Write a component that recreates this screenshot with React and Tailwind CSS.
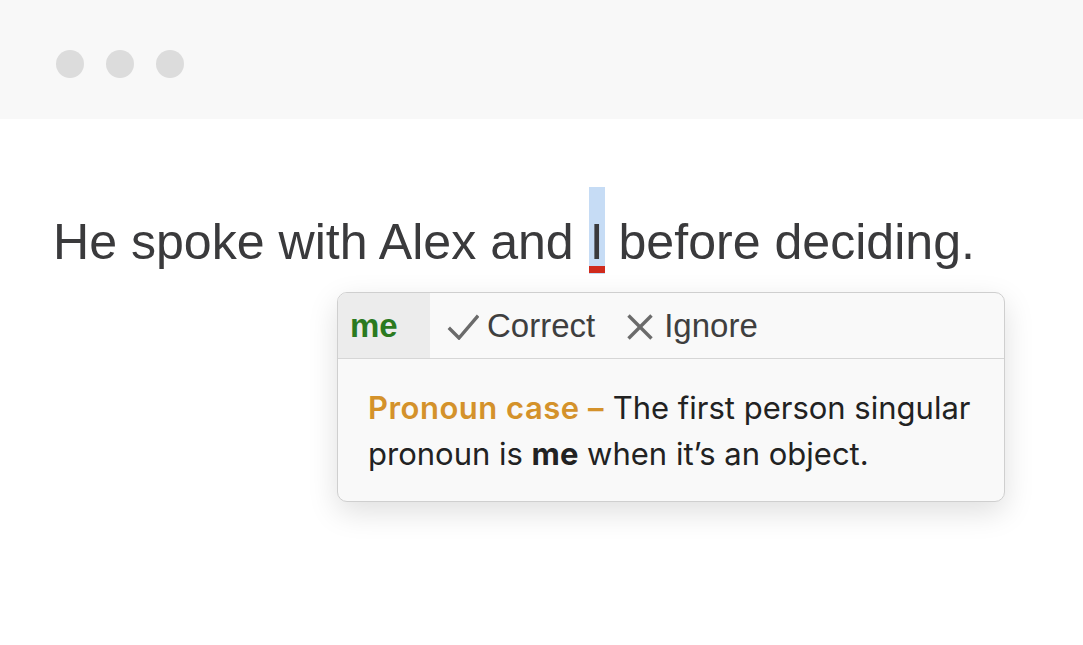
export default function App() {
  return (
    <div className="relative w-[1083px] h-[645px] bg-white overflow-hidden">
      {/* window chrome */}
      <div className="h-[119px] bg-[#f8f8f8] flex items-center gap-[22px] pl-[56px] pt-[8px]">
        <span className="w-[28px] h-[28px] rounded-full bg-[#dcdcdc]" />
        <span className="w-[28px] h-[28px] rounded-full bg-[#dcdcdc]" />
        <span className="w-[28px] h-[28px] rounded-full bg-[#dcdcdc]" />
      </div>

      {/* editor */}
      <div className="pl-[53px] pt-[95px]">
        <p className="text-[50.1px] leading-[56px] text-[#3a3a3c] font-['Liberation_Sans',Arial,sans-serif] whitespace-nowrap">
          He spoke with Alex and{" "}
          <span className="relative inline-block px-[1px] ml-[1px]">
            <span className="absolute left-0 right-0 -top-[27px] -bottom-[4px] bg-[#c6dcf5]" />
            <span className="relative">I</span>
            <span className="absolute left-0 right-0 -bottom-[3px] h-[7px] bg-[#d02b1d]" />
          </span>{" "}
          before deciding.
        </p>
      </div>

      {/* suggestion popover */}
      <div className="absolute left-[337px] top-[292px] w-[668px] rounded-[10px] border border-[#cfcfcf] bg-[#f9f9f9] shadow-[0_10px_30px_rgba(0,0,0,0.13)] overflow-hidden">
        <div className="flex h-[66px] border-b border-[#d6d6d6] font-['Liberation_Sans',Arial,sans-serif] text-[#3f3f3f]">
          <div className="w-[92px] bg-[#ececec] flex items-center pl-[12px] text-[33px] font-bold text-[#2b7a1f]">
            me
          </div>
          <div className="flex items-center">
            <svg width="32" height="26" viewBox="0 0 32 26" className="ml-[17px] mt-[2px]" fill="none" stroke="#6b6b6b" strokeWidth="3.4" strokeLinecap="square">
              <polyline points="3,15 12,24 30,3" />
            </svg>
            <span className="ml-[8px] text-[33px]">Correct</span>
            <svg width="26" height="26" viewBox="0 0 26 26" className="ml-[32px] mt-[2px]" fill="none" stroke="#6b6b6b" strokeWidth="3.4">
              <line x1="1.5" y1="1.5" x2="24.5" y2="24.5" />
              <line x1="24.5" y1="1.5" x2="1.5" y2="24.5" />
            </svg>
            <span className="ml-[11px] text-[33px]">Ignore</span>
          </div>
        </div>
        <div className="pl-[30px] pt-[26px] pb-[24px] text-[31px] leading-[46px] text-[#222] font-['Inter',sans-serif] whitespace-nowrap">
          <span className="font-semibold tracking-[0.5px] text-[#d4922b]">Pronoun case –</span>{" "}
          <span>The first person singular</span>
          <br />
          pronoun is <span className="font-bold">me</span> when it’s an object.
        </div>
      </div>
    </div>
  );
}
